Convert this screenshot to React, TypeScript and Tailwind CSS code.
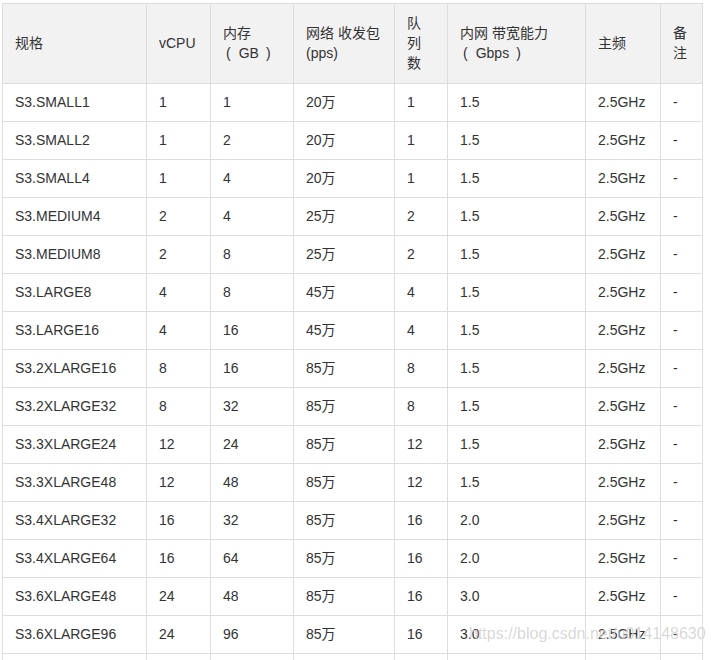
import React from "react";

type Row = [string, string, string, string, string, string, string, string];

const rows: Row[] = [
  ["S3.SMALL1", "1", "1", "20万", "1", "1.5", "2.5GHz", "-"],
  ["S3.SMALL2", "1", "2", "20万", "1", "1.5", "2.5GHz", "-"],
  ["S3.SMALL4", "1", "4", "20万", "1", "1.5", "2.5GHz", "-"],
  ["S3.MEDIUM4", "2", "4", "25万", "2", "1.5", "2.5GHz", "-"],
  ["S3.MEDIUM8", "2", "8", "25万", "2", "1.5", "2.5GHz", "-"],
  ["S3.LARGE8", "4", "8", "45万", "4", "1.5", "2.5GHz", "-"],
  ["S3.LARGE16", "4", "16", "45万", "4", "1.5", "2.5GHz", "-"],
  ["S3.2XLARGE16", "8", "16", "85万", "8", "1.5", "2.5GHz", "-"],
  ["S3.2XLARGE32", "8", "32", "85万", "8", "1.5", "2.5GHz", "-"],
  ["S3.3XLARGE24", "12", "24", "85万", "12", "1.5", "2.5GHz", "-"],
  ["S3.3XLARGE48", "12", "48", "85万", "12", "1.5", "2.5GHz", "-"],
  ["S3.4XLARGE32", "16", "32", "85万", "16", "2.0", "2.5GHz", "-"],
  ["S3.4XLARGE64", "16", "64", "85万", "16", "2.0", "2.5GHz", "-"],
  ["S3.6XLARGE48", "24", "48", "85万", "16", "3.0", "2.5GHz", "-"],
  ["S3.6XLARGE96", "24", "96", "85万", "16", "3.0", "2.5GHz", "-"],
  ["S3.8XLARGE64", "32", "64", "85万", "16", "4.5", "2.5GHz", "-"],
];

const th = "border border-[#dddddd] px-[12px] pt-[8.5px] pb-[10.5px] text-left align-middle font-normal";
const td = "border border-[#dddddd] px-[12px] pt-[7.5px] pb-[9.5px] text-left align-middle";

// header unit like "（ GB ）", parens set apart from the word
const Unit = ({ children }: { children: React.ReactNode }) => (
  <span>
    <span className="ml-[3px] mr-[8px]">(</span>
    {children}
    <span className="ml-[7px]">)</span>
  </span>
);

export default function App() {
  return (
    <div className="relative bg-white min-h-[660px] pt-[3px] pl-[2px] overflow-hidden font-['Liberation_Sans','Noto_Sans_CJK_SC',sans-serif] text-[14px] leading-[20px] text-[#333333]">
      <table className="w-[700px] table-fixed border-collapse">
        <colgroup>
          <col className="w-[144px]" />
          <col className="w-[64px]" />
          <col className="w-[83px]" />
          <col className="w-[101px]" />
          <col className="w-[53px]" />
          <col className="w-[138px]" />
          <col className="w-[75px]" />
          <col className="w-[42px]" />
        </colgroup>
        <thead>
          <tr className="bg-[#f2f2f2]">
            <th className={th}>规格</th>
            <th className={th}>vCPU</th>
            <th className={th}>
              内存
              <br />
              <Unit>GB</Unit>
            </th>
            <th className={th}>
              网络 收发包
              <br />
              (pps)
            </th>
            <th className={th}>
              队<br />列<br />数
            </th>
            <th className={th}>
              内网 带宽能力
              <br />
              <Unit>Gbps</Unit>
            </th>
            <th className={th}>主频</th>
            <th className={th}>
              备<br />注
            </th>
          </tr>
        </thead>
        <tbody>
          {rows.map((r) => (
            <tr key={r[0]}>
              {r.map((c, i) => (
                <td key={i} className={td}>
                  {c}
                </td>
              ))}
            </tr>
          ))}
        </tbody>
      </table>

      {/* csdn watermark */}
      <div className="absolute left-[469px] top-[624px] text-[16px] leading-[20px] text-[rgba(0,0,0,0.18)] [text-shadow:0_0_1px_#ffffff] pointer-events-none">
        https://blog.csdn.net/u014148630
      </div>
    </div>
  );
}
